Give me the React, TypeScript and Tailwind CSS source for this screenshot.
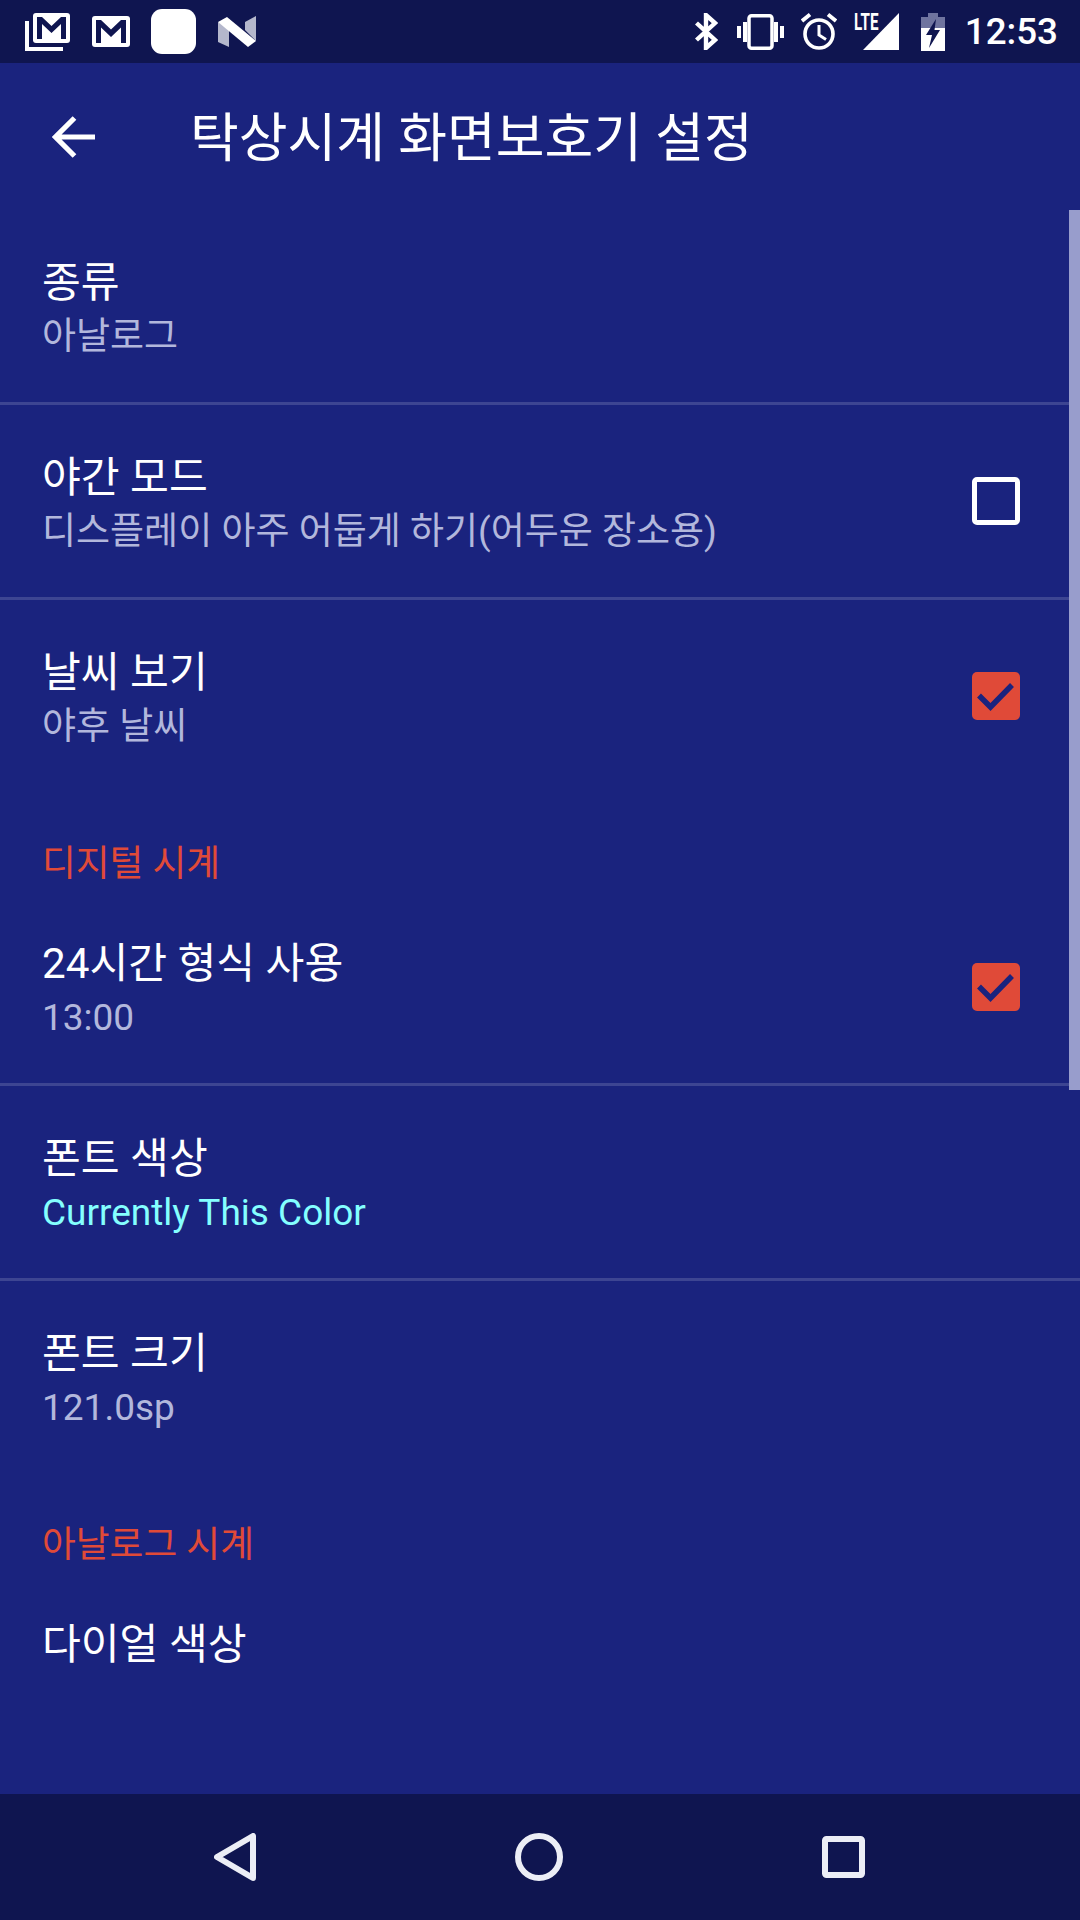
import React from "react";

const FONT = { fontFamily: '"Roboto", "Noto Sans CJK KR", sans-serif' };

function Mark({ checked }: { checked: boolean }) {
  if (!checked) {
    return <div className="w-[48px] h-[48px] rounded-[5px] border-[5.5px] border-white" />;
  }
  return (
    <div className="w-[48px] h-[48px] rounded-[5px] bg-[#e04a38] flex items-center justify-center">
      <svg width="48" height="48" viewBox="0 0 48 48" fill="none">
        <path d="M7 23.5 L18.5 35 L40 13" stroke="#1a237e" strokeWidth="5.5" />
      </svg>
    </div>
  );
}

function Row({
  title,
  summary,
  summaryClass = "text-[#b2b7dc]",
  checked,
  divider,
}: {
  title: string;
  summary?: string;
  summaryClass?: string;
  checked?: boolean;
  divider?: boolean;
}) {
  return (
    <div
      className={`h-[195px] shrink-0 flex items-center pl-[42px] pr-[60px] border-b-[3px] ${
        divider ? "border-[#3d4592]" : "border-transparent"
      }`}
    >
      <div className="flex-1 min-w-0 pt-[7px]">
        <div className="text-[42.2px] leading-[54px] text-white">{title}</div>
        <div className={`text-[37px] leading-[53px] h-[53px] ${summaryClass}`}>{summary}</div>
      </div>
      {checked !== undefined && <Mark checked={checked} />}
    </div>
  );
}

function Category({ label }: { label: string }) {
  return (
    <div className="h-[96px] shrink-0 pl-[42px] pt-[46px] text-[36.75px] leading-[46px] text-[#e04a38]">
      {label}
    </div>
  );
}

function StatusBar() {
  return (
    <div className="h-[63px] shrink-0 bg-[#0f1550] flex items-center justify-between pl-[25px] pr-[22px]">
      <div className="flex items-center">
        <svg width="45" height="38" viewBox="0 0 45 38" fill="none">
          <path d="M2 8 V36 H38" stroke="#fff" strokeWidth="4" />
          <rect x="8" y="0" width="37" height="30" rx="3" fill="#fff" />
          <path d="M12 4 H17 L26.5 13 L36 4 H41 V26 H36 V11 L26.5 20 L17 11 V26 H12 Z" fill="#0f1550" />
        </svg>
        <svg className="ml-[22px]" width="38" height="31" viewBox="0 0 38 31">
          <rect x="0" y="0" width="38" height="31" rx="3" fill="#fff" />
          <path d="M4 4 H9 L19 13.5 L29 4 H34 V27 H29 V11.5 L19 21 L9 11.5 V27 H4 Z" fill="#0f1550" />
        </svg>
        <div className="ml-[21px] w-[45px] h-[45px] rounded-[11px] bg-white" />
        <svg className="ml-[22px]" width="38" height="31" viewBox="0 0 38 31">
          <path d="M0 6 L11 12 V31 L0 26 Z" fill="#b4b7cc" />
          <path d="M27 6 L38 0 V25 L27 14 Z" fill="#b4b7cc" />
          <path d="M0 6 L9 1 L38 25 L30 31 Z" fill="#fff" />
        </svg>
      </div>
      <div className="flex items-center">
        <svg width="23" height="37" viewBox="0 0 23 37" fill="none">
          <path d="M1.5 10 L20 27 L11 35 V2 L20 10 L1.5 27" stroke="#fff" strokeWidth="4.4" />
        </svg>
        <svg className="ml-[19px]" width="47" height="36" viewBox="0 0 47 36" fill="none">
          <rect x="12" y="1.75" width="23" height="32.5" rx="2.5" stroke="#fff" strokeWidth="3.5" />
          <path d="M2 12 V24 M8 8 V28 M39 8 V28 M45 12 V24" stroke="#fff" strokeWidth="4" />
        </svg>
        <svg className="ml-[17px]" width="36" height="37" viewBox="0 0 36 37" fill="none">
          <circle cx="18" cy="21" r="14" stroke="#fff" strokeWidth="3.6" />
          <path d="M18 12 V22 L25 26.5" stroke="#fff" strokeWidth="3" />
          <path d="M1 8 L9 1.5 M35 8 L27 1.5" stroke="#fff" strokeWidth="3.8" />
        </svg>
        <div className="ml-[17px] relative w-[45px] h-[37px]">
          <svg className="absolute right-0 top-0" width="36" height="37" viewBox="0 0 36 37">
            <path d="M36 0 V37 H0 Z" fill="#fff" />
          </svg>
          <span
            className="absolute left-0 top-[-2px] text-[23px] leading-[23px] font-bold text-white scale-x-[0.66] origin-left"
            style={{ fontFamily: '"Roboto", sans-serif' }}
          >
            LTE
          </span>
        </div>
        <svg className="ml-[22px]" width="24" height="38" viewBox="0 0 24 38">
          <path d="M7 0 H17 V4 H24 V38 H0 V4 H7 Z" fill="#6f749f" />
          <path d="M0 15 H24 V38 H0 Z" fill="#fff" />
          <path d="M15 6 L5 22 H11 L8 35 L19 17 H13.5 Z" fill="#0f1550" />
        </svg>
        <span className="ml-[20px] text-[36.75px] leading-[45px] font-medium text-white">12:53</span>
      </div>
    </div>
  );
}

function NavBar() {
  return (
    <div className="h-[126px] shrink-0 bg-[#0f1550] flex items-center justify-center gap-[259px] pr-[1px]">
      <svg width="42" height="48" viewBox="0 0 42 48" fill="none">
        <path d="M39 3 V45 L3 24 Z" stroke="#eceef6" strokeWidth="6" strokeLinejoin="round" />
      </svg>
      <svg width="48" height="48" viewBox="0 0 48 48" fill="none">
        <circle cx="24" cy="24" r="21" stroke="#eceef6" strokeWidth="6" />
      </svg>
      <svg width="43" height="42" viewBox="0 0 43 42" fill="none">
        <rect x="3" y="3" width="37" height="36" rx="1.5" stroke="#eceef6" strokeWidth="6" />
      </svg>
    </div>
  );
}

export default function App() {
  return (
    <div className="w-[1080px] h-[1920px] flex flex-col overflow-hidden bg-[#1a237e]" style={FONT}>
      <StatusBar />
      <div className="h-[147px] shrink-0 flex items-center">
        <svg className="ml-[52px]" width="44" height="42" viewBox="0 0 44 42" fill="none">
          <path d="M43 21 H4 M22.5 2 L3.5 21 L22.5 40" stroke="#fff" strokeWidth="5.2" />
        </svg>
        <h1 className="ml-[94px] mt-[4px] text-[53px] leading-[64px] font-normal text-white">탁상시계 화면보호기 설정</h1>
      </div>
      <div className="relative flex-1 min-h-0 flex flex-col overflow-hidden">
        <div className="absolute right-0 top-0 w-[11px] h-[880px] bg-[#989dcc]" />
        <Row title="종류" summary="아날로그" divider />
        <Row title="야간 모드" summary="디스플레이 아주 어둡게 하기(어두운 장소용)" checked={false} divider />
        <Row title="날씨 보기" summary="야후 날씨" checked={true} />
        <Category label="디지털 시계" />
        <Row title="24시간 형식 사용" summary="13:00" checked={true} divider />
        <Row title="폰트 색상" summary="Currently This Color" summaryClass="text-[#84ffff]" divider />
        <Row title="폰트 크기" summary="121.0sp" />
        <Category label="아날로그 시계" />
        <Row title="다이얼 색상" />
      </div>
      <NavBar />
    </div>
  );
}
